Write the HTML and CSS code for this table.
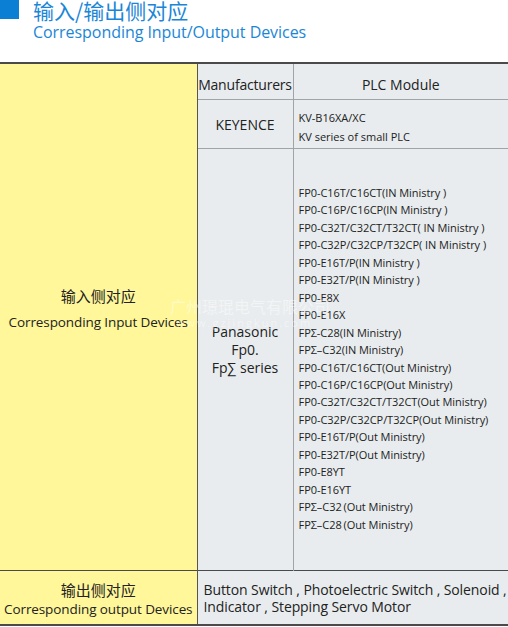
FILE: index.html
```html
<!DOCTYPE html>
<html lang="zh-CN">
<head>
<meta charset="utf-8">
<title>输入/输出侧对应</title>
<link rel="stylesheet" href="styles.css">
</head>
<body>
<header class="head">
  <div class="mark"></div>
  <div class="titles">
    <h1 class="title">输入/输出侧对应</h1>
    <p class="subtitle">Corresponding Input/Output Devices</p>
  </div>
</header>
<div class="wrap">
<table class="io">
  <colgroup><col class="c1"><col class="c2"><col class="c3"></colgroup>
  <tr class="r-head">
    <td rowspan="3" class="yellow"><div class="in-box"><span class="zh">输入侧对应</span><span class="en gap">Corresponding Input Devices</span></div></td>
    <td class="gray hd mf-h">Manufacturers</td>
    <td class="gray hd plc-h">PLC Module</td>
  </tr>
  <tr class="r-key">
    <td class="gray mf"><div class="key">KEYENCE</div></td>
    <td class="gray mod"><div class="mod-in">KV-B16XA/XC<br>KV series of small PLC</div></td>
  </tr>
  <tr class="r-pana">
    <td class="gray mf"><div class="pana">Panasonic<br>Fp0.<br>Fp∑ series</div></td>
    <td class="gray mod">
      <div class="list">
        <div>FP0-C16T/C16CT(IN Ministry )</div>
        <div>FP0-C16P/C16CP(IN Ministry )</div>
        <div>FP0-C32T/C32CT/T32CT( IN Ministry )</div>
        <div>FP0-C32P/C32CP/T32CP( IN Ministry )</div>
        <div>FP0-E16T/P(IN Ministry )</div>
        <div>FP0-E32T/P(IN Ministry )</div>
        <div>FP0-E8X</div>
        <div>FP0-E16X</div>
        <div>FPΣ-C28(IN Ministry)</div>
        <div>FPΣ–C32(IN Ministry)</div>
        <div>FP0-C16T/C16CT(Out Ministry)</div>
        <div>FP0-C16P/C16CP(Out Ministry)</div>
        <div>FP0-C32T/C32CT/T32CT(Out Ministry)</div>
        <div>FP0-C32P/C32CP/T32CP(Out Ministry)</div>
        <div>FP0-E16T/P(Out Ministry)</div>
        <div>FP0-E32T/P(Out Ministry)</div>
        <div>FP0-E8YT</div>
        <div>FP0-E16YT</div>
        <div>FPΣ–C32&#8201;(Out Ministry)</div>
        <div>FPΣ–C28&#8201;(Out Ministry)</div>
      </div>
    </td>
  </tr>
  <tr class="r-out">
    <td class="yellow"><div class="out-box"><span class="zh">输出侧对应</span><span class="en">Corresponding output Devices</span></div></td>
    <td colspan="2" class="gray outs">Button Switch , Photoelectric Switch , Solenoid ,<br>Indicator , Stepping Servo Motor</td>
  </tr>
</table>
<div class="watermark" aria-hidden="true">
  <div class="wm-zh">广州璟琨电气有限公司</div>
  <div class="wm-en">www.gzjingkun.com</div>
</div>
</div>
</body>
</html>
```

FILE: styles.css
```css
html, body {
  margin: 0;
  padding: 0;
  background: #ffffff;
}
body {
  width: 508px;
  height: 627px;
  overflow: hidden;
  font-family: "Open Sans", "Noto Sans", "Noto Sans CJK SC", sans-serif;
  color: #222222;
}
.head {
  display: flex;
  align-items: flex-start;
  height: 62px;
}
.mark {
  width: 19px;
  height: 19px;
  background: #0a7fd3;
  flex: none;
}
.titles {
  margin-left: 14px;
  color: #1b86d7;
}
.title {
  margin: -3px 0 0 0;
  font-family: "Noto Sans CJK SC", sans-serif;
  font-weight: 400;
  font-size: 21px;
  line-height: 26px;
}
.subtitle {
  margin: 0;
  font-size: 16px;
  line-height: 18px;
  letter-spacing: -0.05px;
}
.wrap {
  position: relative;
}
.io {
  border-collapse: collapse;
  table-layout: fixed;
  width: 508px;
  border-top: 2px solid #4a4a4a;
  border-bottom: 2px solid #4a4a4a;
}
.c1 { width: 197px; }
.c2 { width: 96px; }
.c3 { width: 215px; }
.io td {
  padding: 0;
  vertical-align: middle;
}
.yellow {
  background: #fff799;
  border-right: 1px solid #555555;
  text-align: center;
}
.gray {
  background: #e8ecee;
}
.zh {
  display: block;
  font-family: "Noto Sans CJK SC", sans-serif;
  font-size: 15px;
  line-height: 22px;
}
.en {
  display: block;
  font-size: 13.5px;
  line-height: 20px;
  letter-spacing: -0.1px;
}
.en.gap {
  margin-top: 5px;
}
.in-box {
  margin-bottom: 18px;
}
.r-head td.gray { height: 29px; border-bottom: 1px solid #a0a4a6; }
.r-key td.gray { height: 48px; border-bottom: 1px solid #a0a4a6; }
.r-pana td.gray { height: 421px; }
.mf-h, .mf {
  border-right: 1px solid #a0a4a6;
  text-align: center;
}
.io td.hd {
  font-size: 14px;
  padding-top: 6px;
}
.mf-h { letter-spacing: -0.2px; }
.plc-h {
  text-align: center;
  font-size: 14.5px;
}
.mf {
  font-size: 14px;
  line-height: 18px;
}
.key {
  margin-top: 2px;
}
.mod {
  font-size: 11px;
  line-height: 19px;
}
.mod-in {
  padding-left: 5px;
  padding-top: 6px;
}
.pana {
  margin-bottom: 20px;
}
.list {
  padding-left: 5px;
  line-height: 17.45px;
  letter-spacing: -0.05px;
  margin-bottom: 2px;
}
.r-out td {
  border-top: 1px solid #4a4a4a;
  height: 53px;
}
.out-box {
  margin-top: 4px;
}
.r-out .zh { line-height: 20px; font-size: 15px; }
.r-out .en { line-height: 19px; font-size: 13.5px; }
.outs {
  padding-left: 6px !important;
  font-size: 14px;
  line-height: 17px;
  letter-spacing: -0.1px;
}
.watermark {
  position: absolute;
  left: 170px;
  top: 234px;
  color: rgba(255, 255, 255, 0.45);
  pointer-events: none;
}
.wm-zh {
  font-family: "Noto Sans CJK SC", serif;
  font-size: 16px;
  line-height: 20px;
}
.wm-en {
  font-size: 11px;
  line-height: 14px;
  letter-spacing: 2px;
  padding-left: 6px;
}
```
